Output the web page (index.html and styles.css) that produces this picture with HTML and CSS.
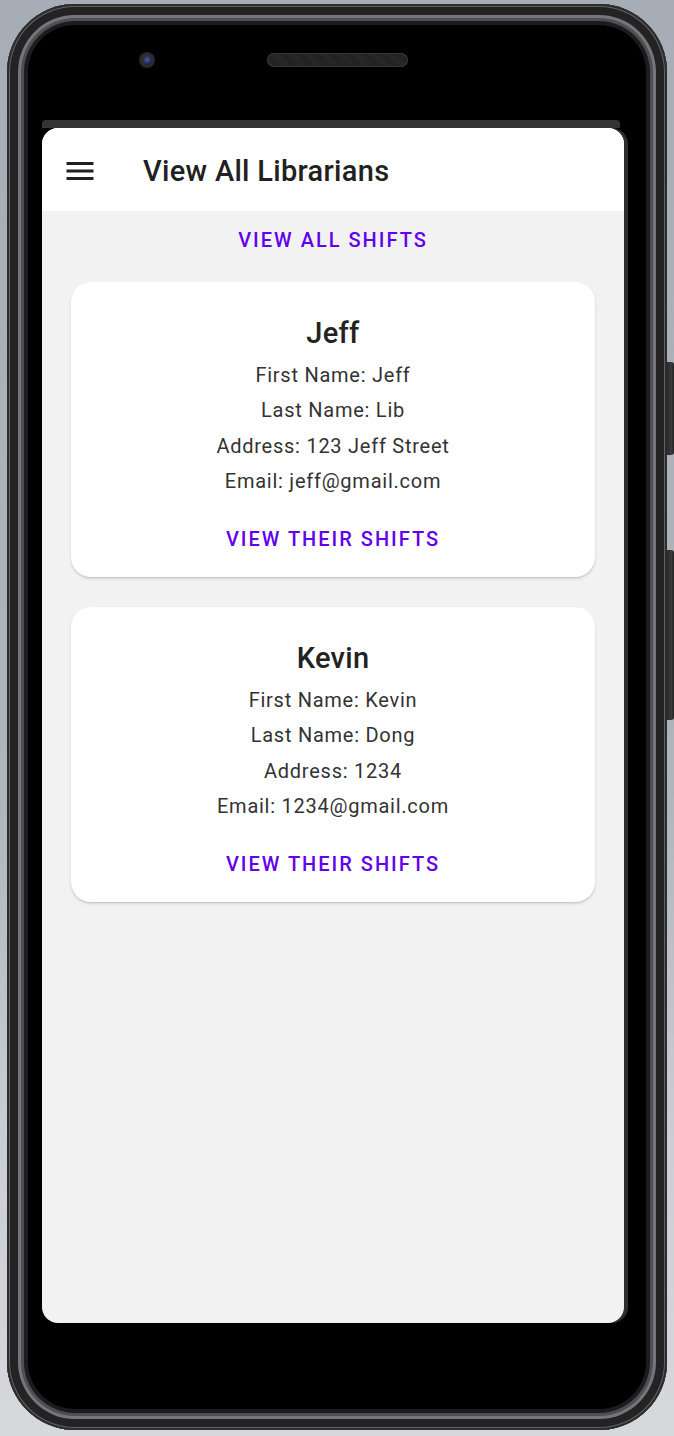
FILE: index.html
```html
<!DOCTYPE html>
<html lang="en">
<head>
<meta charset="utf-8">
<title>View All Librarians</title>
<link rel="stylesheet" href="styles.css">
</head>
<body>
<div class="stage">
  <div class="phone">
    <div class="bezel-top">
      <div class="camera"><div class="lens"></div></div>
      <div class="speaker"></div>
    </div>
    <div class="screen">
      <div class="status"></div>
      <div class="app">
        <header class="appbar">
          <svg class="menu" viewBox="0 0 24 24" width="36" height="36" aria-hidden="true"><path d="M3 18h18v-2H3v2zm0-5h18v-2H3v2zm0-7v2h18V6H3z" fill="#212121"/></svg>
          <h1 class="title">View All Librarians</h1>
        </header>
        <main class="content">
          <button class="text-btn top-btn">VIEW ALL SHIFTS</button>
          <section class="card">
            <h2 class="name">Jeff</h2>
            <p class="line">First Name: Jeff</p>
            <p class="line">Last Name: Lib</p>
            <p class="line">Address: 123 Jeff Street</p>
            <p class="line">Email: jeff@gmail.com</p>
            <button class="text-btn card-btn">VIEW THEIR SHIFTS</button>
          </section>
          <section class="card">
            <h2 class="name">Kevin</h2>
            <p class="line">First Name: Kevin</p>
            <p class="line">Last Name: Dong</p>
            <p class="line">Address: 1234</p>
            <p class="line">Email: 1234@gmail.com</p>
            <button class="text-btn card-btn">VIEW THEIR SHIFTS</button>
          </section>
        </main>
      </div>
    </div>
    <div class="side-btn power"></div>
    <div class="side-btn volume"></div>
  </div>
</div>
</body>
</html>
```

FILE: styles.css
```css
html, body {
  margin: 0;
  padding: 0;
}
body {
  width: 674px;
  height: 1436px;
  overflow: hidden;
  background: linear-gradient(180deg, #a7adb6 0%, #b0b5bc 55%, #cbced2 80%, #d6d8db 100%);
  font-family: Roboto, "Noto Sans", Arial, sans-serif;
}
.stage {
  padding: 4px 0 0 7px;
}
.phone {
  position: relative;
  width: 660px;
  height: 1426px;
  border-radius: 68px;
  background: #000;
  box-shadow:
    inset 0 0 0 2px #2c2c2c,
    inset 0 0 0 3px #5f6166,
    inset 0 0 0 11px #232323,
    inset 0 0 0 14px #74767a,
    inset 0 0 0 17px #4c4f54,
    inset 0 0 0 21px #1c1c1c;
}
.bezel-top {
  height: 16px;
  padding: 48px 0 52px;
  display: flex;
  align-items: center;
}
.camera {
  width: 16px;
  height: 16px;
  margin-left: 132px;
  border-radius: 50%;
  background: radial-gradient(circle, #3a3a3a 0%, #262626 70%, #111 100%);
  display: flex;
  align-items: center;
  justify-content: center;
}
.lens {
  width: 9px;
  height: 9px;
  border-radius: 50%;
  background: radial-gradient(circle at 45% 40%, #4b5a9a 0%, #1d2756 60%, #0d1230 100%);
}
.speaker {
  width: 141px;
  height: 14px;
  margin-left: 112px;
  border-radius: 7px;
  background: repeating-linear-gradient(45deg, #2a2a2a 0 1px, #1f1f1f 1px 2px);
  box-shadow: inset 0 0 0 1px #353535;
}
.screen {
  margin-left: 35px;
  width: 582px;
}
.status {
  height: 8px;
  margin-right: 4px;
  background: #333;
  border-radius: 4px 4px 0 0;
}
.app {
  height: 1195px;
  border-radius: 16px;
  overflow: hidden;
  background: #f2f2f2;
  display: flex;
  flex-direction: column;
  box-shadow: 4px 0 0 #2e2e2e;
}
.appbar {
  height: 80px;
  padding: 3px 0 0 20px;
  background: #fff;
  display: flex;
  align-items: center;
  flex: none;
}
.menu {
  display: block;
  flex: none;
}
.title {
  margin: 0 0 0 45px;
  font-size: 29px;
  font-weight: 500;
  color: #212121;
  letter-spacing: 0.3px;
}
.content {
  display: flex;
  flex-direction: column;
  align-items: center;
  padding: 5px 29px 0;
}
.text-btn {
  height: 48px;
  border: 0;
  background: transparent;
  color: #6200ee;
  font-family: Roboto, "Noto Sans", Arial, sans-serif;
  font-size: 20px;
  font-weight: 500;
  letter-spacing: 2px;
  padding: 0 10px;
  cursor: pointer;
}
.top-btn {
  margin-bottom: 18px;
}
.card {
  width: 524px;
  box-sizing: border-box;
  background: #fff;
  border-radius: 20px;
  box-shadow: 0 2px 3px rgba(0,0,0,0.12), 0 1px 1px rgba(0,0,0,0.08);
  display: flex;
  flex-direction: column;
  align-items: center;
  padding: 33px 0 14px;
  margin-bottom: 30px;
}
.name {
  margin: 0 0 7px;
  height: 36px;
  line-height: 36px;
  font-size: 29px;
  font-weight: 500;
  letter-spacing: 0.3px;
  color: #222;
}
.line {
  margin: 0;
  line-height: 35.3px;
  font-size: 20px;
  letter-spacing: 0.75px;
  color: #333;
}
.card-btn {
  margin-top: 16px;
}
.side-btn {
  position: absolute;
  left: 660px;
  width: 7px;
  background: linear-gradient(90deg, #2a2a2a, #3a3a3a 60%, #222);
  border-radius: 0 3px 3px 0;
}
.power {
  top: 358px;
  height: 93px;
}
.volume {
  top: 546px;
  height: 170px;
}
```
